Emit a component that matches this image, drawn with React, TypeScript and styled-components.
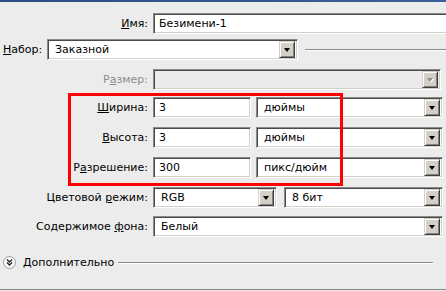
import React from "react";
import styled, { createGlobalStyle } from "styled-components";

const Global = createGlobalStyle`
  html, body { margin: 0; padding: 0; background: #ececec; }
  #root { width: 446px; height: 291px; }
`;

const Window = styled.div`
  position: relative;
  width: 446px;
  height: 291px;
  overflow: hidden;
  background: #ececec;
  font-family: Tahoma, "DejaVu Sans", "Noto Sans", sans-serif;
  font-size: 11px;
  color: #000;
  display: flex;
  flex-direction: column;
`;

const TitleEdge = styled.div`
  flex: none;
  height: 2px;
  background: linear-gradient(to right, #2c4c84, #3b5f99);
`;

const Row = styled.div<{ $top: number; $right?: number; $left?: number }>`
  display: flex;
  align-items: center;
  height: 21px;
  margin-top: ${(p) => p.$top}px;
  padding-right: ${(p) => p.$right ?? 0}px;
  padding-left: ${(p) => p.$left ?? 0}px;
  gap: 5px;
  flex: none;
`;

const Label = styled.label<{ $width?: number; $left?: boolean; $disabled?: boolean }>`
  flex: none;
  width: ${(p) => p.$width ?? 148}px;
  text-align: ${(p) => (p.$left ? "left" : "right")};
  white-space: nowrap;
  color: ${(p) => (p.$disabled ? "#8d8d8d" : "#000")};
`;

const Sunken = styled.div<{ $width?: number; $disabled?: boolean; $overflow?: number; $ml?: number }>`
  box-sizing: border-box;
  height: 21px;
  ${(p) => (p.$width ? `width: ${p.$width}px; flex: none;` : "flex: 1;")}
  margin-right: ${(p) => -(p.$overflow ?? 0)}px;
  margin-left: ${(p) => p.$ml ?? 0}px;
  display: flex;
  align-items: center;
  background: ${(p) => (p.$disabled ? "#ebebeb" : "#fff")};
  border-style: solid;
  border-width: 1px;
  border-color: #8a8a8a #ffffff #ffffff #8a8a8a;
  box-shadow: inset 1px 1px 0 #4a4a4a, inset -1px -1px 0 #d4d0c8;
  padding: 2px;
`;

const Value = styled.span<{ $pad?: number }>`
  flex: 1;
  padding-left: ${(p) => p.$pad ?? 3}px;
  white-space: nowrap;
  overflow: hidden;
`;

const DropButton = styled.div`
  flex: none;
  box-sizing: border-box;
  width: 16px;
  height: 17px;
  background: #d4d0c8;
  border-style: solid;
  border-width: 1px;
  border-color: #d4d0c8 #404040 #404040 #d4d0c8;
  box-shadow: inset 1px 1px 0 #ffffff, inset -1px -1px 0 #808080;
  display: flex;
  align-items: center;
  justify-content: center;
`;

const Arrow = styled.span<{ $disabled?: boolean }>`
  width: 0;
  height: 0;
  margin-top: 1px;
  border-left: 3.5px solid transparent;
  border-right: 3.5px solid transparent;
  border-top: 4px solid ${(p) => (p.$disabled ? "#8d8d8d" : "#000")};
  filter: ${(p) => (p.$disabled ? "drop-shadow(1px 1px 0 #fff)" : "none")};
`;

const Etch = styled.div<{ $gap?: number }>`
  flex: 1;
  margin-left: ${(p) => p.$gap ?? 0}px;
  height: 0;
  border-top: 1px solid #8a8a8a;
  border-bottom: 1px solid #ffffff;
`;

const AdvancedRow = styled.div`
  display: flex;
  align-items: center;
  height: 13px;
  margin-top: 19px;
  padding-left: 3px;
  padding-right: 13px;
  flex: none;
`;

const AdvancedText = styled.span`
  margin-left: 7px;
  margin-right: 4px;
  white-space: nowrap;
`;

const BottomRule = styled.div`
  margin-top: auto;
  margin-bottom: 1px;
  height: 0;
  border-top: 1px solid #858585;
  flex: none;
`;

const Highlight = styled.div`
  position: absolute;
  left: 68px;
  top: 93px;
  width: 275px;
  height: 93px;
  box-sizing: border-box;
  border: 3px solid #ff0000;
  pointer-events: none;
`;

const Select: React.FC<{ value?: string; width?: number; disabled?: boolean; ml?: number }> = ({
  value,
  width,
  disabled,
  ml,
}) => (
  <Sunken $width={width} $disabled={disabled} $ml={ml}>
    <Value $pad={5}>{value}</Value>
    <DropButton>
      <Arrow $disabled={disabled} />
    </DropButton>
  </Sunken>
);

const ChevronIcon = () => (
  <svg width="13" height="13" viewBox="0 0 13 13">
    <circle cx="6.5" cy="6.5" r="6" fill="#fafafa" stroke="#9a9a9a" />
    <path d="M4 3.5 L6.5 6 L9 3.5 M4 6.5 L6.5 9 L9 6.5" fill="none" stroke="#222" strokeWidth="1.3" />
  </svg>
);

export default function App() {
  return (
    <>
      <Global />
      <Window>
        <TitleEdge />
        <Row $top={11}>
          <Label><u>И</u>мя:</Label>
          <Sunken $overflow={6}>
            <Value>Безимени-1</Value>
          </Sunken>
        </Row>
        <Row $top={5} $left={3}>
          <Label $left $width={39}><u>Н</u>абор:</Label>
          <Select value="Заказной" width={251} />
          <Etch $gap={2} />
        </Row>
        <Row $top={9} $right={5}>
          <Label $disabled>Р<u>а</u>змер:</Label>
          <Select disabled />
        </Row>
        <Row $top={7} $right={3}>
          <Label><u>Ш</u>ирина:</Label>
          <Sunken $width={98}>
            <Value>3</Value>
          </Sunken>
          <Select value="дюймы" />
        </Row>
        <Row $top={9} $right={3}>
          <Label><u>В</u>ысота:</Label>
          <Sunken $width={98}>
            <Value>3</Value>
          </Sunken>
          <Select value="дюймы" />
        </Row>
        <Row $top={9} $right={3}>
          <Label>Р<u>а</u>зрешение:</Label>
          <Sunken $width={98}>
            <Value>300</Value>
          </Sunken>
          <Select value="пикс/дюйм" />
        </Row>
        <Row $top={9} $right={3}>
          <Label>Цветовой <u>р</u>ежим:</Label>
          <Select value="RGB" width={124} />
          <Select value="8 бит" ml={2} />
        </Row>
        <Row $top={8} $right={3}>
          <Label>Содержимое <u>ф</u>она:</Label>
          <Select value="Белый" />
        </Row>
        <AdvancedRow>
          <ChevronIcon />
          <AdvancedText>Дополнительно</AdvancedText>
          <Etch />
        </AdvancedRow>
        <BottomRule />
        <Highlight />
      </Window>
    </>
  );
}
